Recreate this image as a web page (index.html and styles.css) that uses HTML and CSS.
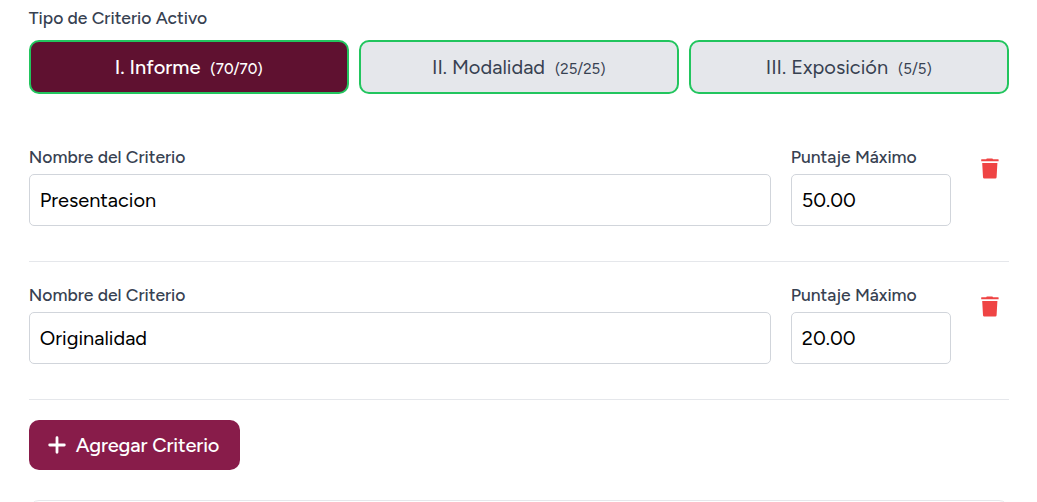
FILE: index.html
```html
<!DOCTYPE html>
<html lang="es">
<head>
<meta charset="utf-8">
<title>Criterios</title>
<link rel="stylesheet" href="styles.css">
</head>
<body>
<main class="page">
  <div class="label type-label">Tipo de Criterio Activo</div>
  <div class="tabs">
    <button class="tab active"><span>I. Informe</span><span class="score">(70/70)</span></button>
    <button class="tab"><span>II. Modalidad</span><span class="score">(25/25)</span></button>
    <button class="tab"><span>III. Exposición</span><span class="score">(5/5)</span></button>
  </div>
  <section class="row">
    <label class="field name"><span class="label">Nombre del Criterio</span><input class="input" value="Presentacion"></label>
    <label class="field points"><span class="label">Puntaje Máximo</span><input class="input" value="50.00"></label>
    <button class="delete" aria-label="Eliminar"><svg class="trash" viewBox="0 0 18 21"><path d="M5.200 1.200 5.800.4h5.600l.6.8h5.200q.4 0 .4.400V3.300H.2V1.600q0-.4.4-.4zM1.200 4.900h15.200l-.8 14.400q-.1 1.200-1.300 1.200H3.300q-1.200 0-1.300-1.200z"/></svg></button>
  </section>
  <section class="row">
    <label class="field name"><span class="label">Nombre del Criterio</span><input class="input" value="Originalidad"></label>
    <label class="field points"><span class="label">Puntaje Máximo</span><input class="input" value="20.00"></label>
    <button class="delete" aria-label="Eliminar"><svg class="trash" viewBox="0 0 18 21"><path d="M5.200 1.200 5.800.4h5.600l.6.8h5.200q.4 0 .4.400V3.300H.2V1.600q0-.4.4-.4zM1.200 4.900h15.200l-.8 14.400q-.1 1.200-1.300 1.200H3.300q-1.200 0-1.300-1.200z"/></svg></button>
  </section>
  <button class="add"><svg class="plus" viewBox="0 0 18 18"><path d="M9 1.700v14.600M1.700 9h14.600"/></svg><span>Agregar Criterio</span></button>
  <div class="panel"></div>
</main>
</body>
</html>
```
FILE: styles.css
```css
* { box-sizing: border-box; }
body { margin: 0; height: 502px; overflow: hidden; background: #fff; font-family: Figtree, Lato, "Open Sans", sans-serif; }
button, input { font: inherit; margin: 0; }
.page { width: 980px; margin-left: 28.75px; padding-top: 6px; }
.label { display: block; height: 25px; font-size: 17.5px; line-height: 23px; font-weight: 500; color: #374151; white-space: nowrap; }
.type-label { margin-bottom: 9px; }
.tabs { display: grid; grid-template-columns: repeat(3, 320px); gap: 10px; margin-bottom: 31px; }
.tab { height: 54px; padding: 0; display: flex; align-items: center; justify-content: center; gap: 10px; border: 2px solid #22c55e; border-radius: 10px; background: #e5e7eb; color: #374151; font-size: 20px; line-height: 30px; white-space: nowrap; }
.active { background: #5f1130; color: #fff; font-weight: 500; }
.score { font-size: 15px; padding-top: 3px; }
.row { display: flex; gap: 20px; height: 137px; padding-top: 20px; border-bottom: 1px solid #e5e7eb; margin-bottom: 1px; }
.field { display: block; }
.name { width: 742px; }
.points { width: 160px; }
.field .label { margin-bottom: 4px; }
.input { display: block; width: 100%; height: 52px; padding: 0 10px; border: 1px solid #d1d5db; border-radius: 5px; background: #fff; color: #000; font-size: 20px; outline: none; }
.delete { align-self: flex-start; width: 38px; height: 41px; margin-top: 3px; padding: 10px; border: 0; background: transparent; }
.trash { display: block; width: 18px; height: 21px; fill: #ef4444; }
.add { display: flex; align-items: center; width: 211px; height: 50px; margin-top: 20px; padding: 0 0 0 19px; gap: 10px; border: 0; border-radius: 10px; background: #881c4a; color: #fff; font-size: 20px; font-weight: 500; letter-spacing: -.12px; white-space: nowrap; }
.plus { width: 18px; height: 18px; fill: none; stroke: #fff; stroke-width: 2.8; stroke-linecap: round; }
.panel { height: 50px; margin-top: 30px; border: 1px solid #e5e7eb; border-radius: 10px; }
```
